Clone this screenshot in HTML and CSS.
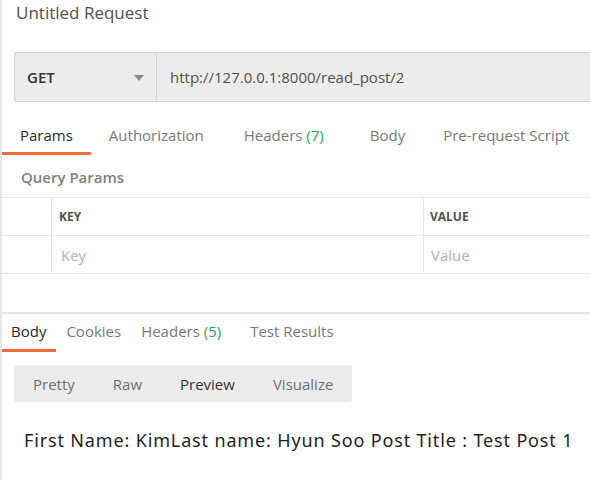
FILE: index.html
```html
<!DOCTYPE html>
<html>
<head>
<meta charset="utf-8">
<link rel="stylesheet" href="styles.css">
</head>
<body>
<div class="app">
  <div class="title">Untitled Request</div>
  <div class="urlbar">
    <div class="method">
      <span class="method-name">GET</span>
      <span class="caret"></span>
    </div>
    <div class="url">http://127.0.0.1:8000/read_post/2</div>
  </div>
  <div class="tabs req-tabs">
    <div class="tab active">Params</div>
    <div class="tab">Authorization</div>
    <div class="tab">Headers <span class="count">(7)</span></div>
    <div class="tab">Body</div>
    <div class="tab">Pre-request Script</div>
  </div>
  <div class="section-label">Query Params</div>
  <div class="table">
    <div class="row head">
      <div class="cell check"></div>
      <div class="cell key">KEY</div>
      <div class="cell value">VALUE</div>
    </div>
    <div class="row">
      <div class="cell check"></div>
      <div class="cell key placeholder">Key</div>
      <div class="cell value placeholder">Value</div>
    </div>
  </div>
  <div class="divider"></div>
  <div class="tabs res-tabs">
    <div class="tab active">Body</div>
    <div class="tab">Cookies</div>
    <div class="tab">Headers <span class="count">(5)</span></div>
    <div class="tab">Test Results</div>
  </div>
  <div class="modes">
    <div class="mode">Pretty</div>
    <div class="mode">Raw</div>
    <div class="mode current">Preview</div>
    <div class="mode">Visualize</div>
  </div>
  <div class="result">First Name: KimLast name: Hyun Soo Post Title : Test Post 1</div>
</div>
</body>
</html>
```
FILE: styles.css
```css
html, body {
  margin: 0;
  padding: 0;
  background: #ffffff;
}
body {
  font-family: "Open Sans", "Noto Sans", sans-serif;
  overflow: hidden;
}
.app {
  border-left: 2px solid #e6e6e6;
  height: 480px;
  box-sizing: border-box;
}
.title {
  padding-left: 14px;
  font-size: 17px;
  line-height: 26px;
  color: #505050;
}
.urlbar {
  display: flex;
  margin-top: 26px;
  margin-left: 12px;
  height: 50px;
  box-sizing: border-box;
  border: 1px solid #d4d4d4;
  border-right: none;
  border-radius: 3px 0 0 3px;
  background: #ececec;
}
.method {
  width: 142px;
  flex: none;
  display: flex;
  align-items: center;
  justify-content: space-between;
  padding: 0 12px 0 12px;
  box-sizing: border-box;
  border-right: 1px solid #d4d4d4;
}
.method-name {
  font-size: 15px;
  font-weight: 600;
  color: #333333;
}
.caret {
  width: 0;
  height: 0;
  border-left: 5px solid transparent;
  border-right: 5px solid transparent;
  border-top: 6px solid #8a8a8a;
  margin-top: 1px;
}
.url {
  flex: 1;
  display: flex;
  align-items: center;
  padding-left: 13px;
  font-size: 15px;
  color: #505050;
}
.tabs {
  display: flex;
}
.req-tabs {
  margin-top: 16px;
}
.tab {
  font-size: 15px;
  color: #787878;
  white-space: nowrap;
  border-bottom: 3px solid transparent;
}
.req-tabs .tab {
  padding: 0 18px;
  line-height: 34px;
}
.req-tabs .tab:nth-child(3) {
  margin-left: 4px;
}
.req-tabs .tab:nth-child(4) {
  margin-left: 10px;
}
.req-tabs .tab:nth-child(5) {
  margin-left: 2px;
}
.tab.active {
  color: #282828;
  border-bottom-color: #f26b3a;
}
.count {
  color: #26a65b;
}
.section-label {
  margin-top: 12px;
  padding-left: 19px;
  font-size: 15px;
  font-weight: 600;
  line-height: 20px;
  color: #808080;
}
.table {
  margin-top: 10px;
  border-top: 1px solid #e6e6e6;
}
.row {
  display: flex;
  height: 38px;
  box-sizing: border-box;
  border-bottom: 1px solid #e6e6e6;
}
.cell {
  display: flex;
  align-items: center;
  box-sizing: border-box;
}
.check {
  width: 50px;
  flex: none;
  border-right: 1px solid #e6e6e6;
}
.key {
  width: 372px;
  flex: none;
  padding-left: 7px;
  border-right: 1px solid #e6e6e6;
}
.value {
  flex: 1;
  padding-left: 6px;
}
.head .cell {
  font-size: 12px;
  font-weight: 700;
  color: #505050;
}
.placeholder {
  font-size: 15px;
  color: #b3b3b3;
  padding-left: 9px;
}
.value.placeholder {
  padding-left: 7px;
}
.divider {
  margin-top: 38px;
  height: 2px;
  background: #e6e6e6;
}
.res-tabs .tab {
  padding: 0 10px;
  line-height: 35px;
}
.res-tabs .tab:first-child {
  padding-left: 9px;
}
.res-tabs .tab:nth-child(3) {
  padding-right: 19px;
}
.modes {
  display: inline-flex;
  margin-top: 13px;
  margin-left: 12px;
  height: 37px;
  align-items: center;
  background: #ebebeb;
  border-radius: 3px;
}
.mode {
  padding: 0 19px;
  font-size: 15px;
  color: #707070;
}
.mode.current {
  color: #333333;
}
.result {
  margin-top: 26px;
  padding-left: 22px;
  font-family: "Noto Sans", "Noto Sans CJK KR", sans-serif;
  font-size: 18px;
  letter-spacing: 0.85px;
  line-height: 24px;
  color: #1e1e1e;
}
```
